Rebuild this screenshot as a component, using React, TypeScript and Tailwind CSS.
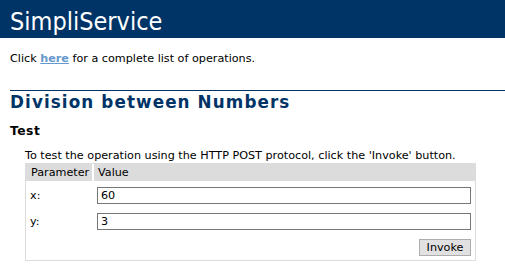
import React from "react"

const params = [
  { name: "x", value: "60" },
  { name: "y", value: "3" },
]

export default function App() {
  return (
    <div className="min-h-[267px] w-full bg-white font-['DejaVu_Sans',Verdana,sans-serif] text-black">
      {/* Banner */}
      <div className="flex h-[38px] items-start bg-[#003366] pl-[10px] pt-[7px] font-['DejaVu_Sans_Condensed','Liberation_Sans',sans-serif] text-[25px] leading-[30px] text-white">
        SimpliService
      </div>

      <div className="pl-[10px]">
        <p className="mt-[14px] h-[14px] text-[11.2px] leading-[14px]">
          Click{" "}
          <a href="#" className="font-bold text-[#6699cc] underline">
            here
          </a>{" "}
          for a complete list of operations.
        </p>

        <div className="mt-[24px] border-t border-[#003366]" />

        <h2 className="mt-[1px] text-[16.8px] font-bold leading-[20px] tracking-[1.1px] text-[#003366]">
          Division between Numbers
        </h2>

        <h3 className="mt-[12px] text-[12.3px] font-bold leading-[15px] tracking-[0.5px]">Test</h3>

        {/* Test form */}
        <div className="mt-[10px] pl-[15px] text-[11.2px] leading-[14px]">
          <p>To test the operation using the HTTP POST protocol, click the 'Invoke' button.</p>

          <div className="w-[451px] border border-[#dcdcdc] pb-[4px]">
            <div className="flex h-[17px] items-center">
              <div className="flex h-full w-[66px] items-center bg-[#dcdcdc] pl-[5px]">Parameter</div>
              <div className="ml-[2px] flex h-full flex-1 items-center bg-[#dcdcdc] pl-[4px]">Value</div>
            </div>

            <div className="flex flex-col gap-[9px] pt-[6px]">
              {params.map((p) => (
                <div key={p.name} className="flex h-[17px] items-center">
                  <div className="w-[68px] pl-[4px]">{p.name}:</div>
                  <div className="flex-1 pl-[3px] pr-[4px]">
                    <input
                      type="text"
                      defaultValue={p.value}
                      className="h-[17px] w-full border border-[#767676] bg-white px-[3px] text-[11.2px] leading-[15px] outline-none"
                    />
                  </div>
                </div>
              ))}

              <div className="flex h-[17px] justify-end pr-[4px]">
                <button className="h-[17px] w-[52px] border border-[#adadad] bg-[#e1e1e1] text-[11.2px] leading-[15px]">
                  Invoke
                </button>
              </div>
            </div>
          </div>
        </div>
      </div>
    </div>
  )
}
